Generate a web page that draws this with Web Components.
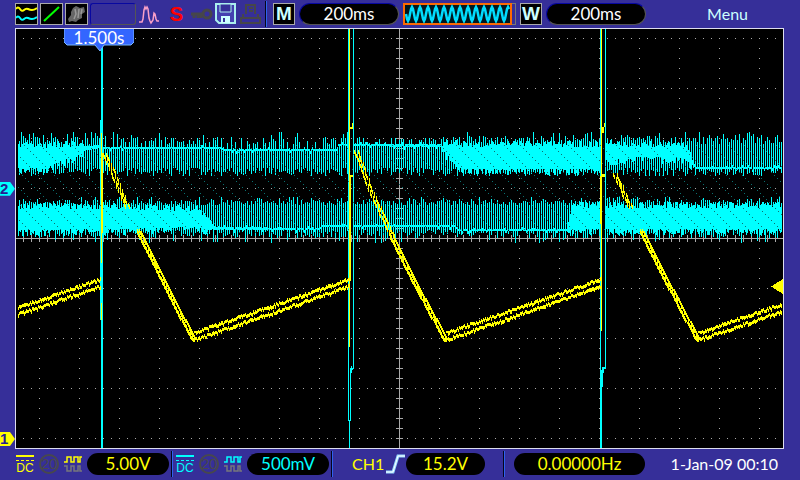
<!DOCTYPE html>
<html lang="en">
<head>
<meta charset="utf-8">
<title>Oscilloscope</title>
<style>
body { margin: 0; background: #362f99; }
</style>
</head>
<body>
<scope-screen></scope-screen>
<script>
const define = (name, html, ready) => {
  const t = document.createElement('template');
  t.innerHTML = html;
  customElements.define(name, class extends HTMLElement {
    constructor() {
      super();
      this.attachShadow({ mode: 'open' }).append(t.content.cloneNode(true));
      if (ready) ready.call(this, this.shadowRoot);
    }
  });
};

define('value-pill', `
<style>
:host { display: flex; align-items: center; justify-content: center; box-sizing: border-box; height: 22px; border-radius: 11px; background: #000; font-size: 17px; line-height: 22px; white-space: nowrap; }
:host([bevel]) { border: 1px solid; border-color: #0808a0 #555 #555 #0808a0; line-height: 20px; }
</style><slot></slot>`);

define('bar-divider', `
<style>:host { display: block; width: 1px; height: 26px; background: #05051c; border-right: 1px solid #2e62ee; }</style>`);

define('letter-box', `
<style>:host { display: grid; place-items: center; box-sizing: border-box; width: 22px; height: 22px; border: 1px solid #aaa; background: #000; color: #cff; font: bold 19px/20px "Liberation Sans", sans-serif; }</style><slot></slot>`);

define('icon-box', `
<style>:host { display: block; box-sizing: border-box; width: 23px; height: 22px; border: 1px solid #aaa; background: #000; }
:host([wide]) { width: 46px; background: none; border-color: #0808a0 #555 #555 #0808a0; border-radius: 3px; }
::slotted(svg) { display: block; }</style><slot></slot>`);

define('channel-info', `
<style>
:host { display: flex; align-items: center; gap: 5px; }
svg { display: block; }
.dc { width: 18px; padding-top: 1px; text-align: center; }
.dc svg { margin-bottom: 1px; }
.dc span { display: block; font: 12px/12px "Liberation Sans", sans-serif; }
text { font-family: "Liberation Sans", sans-serif; }
</style>
<div class="dc"><svg width="18" height="6" viewBox="0 0 18 6"><path d="M0 1h18" stroke="currentColor" stroke-width="2"/><path d="M0 5.5h18" stroke="currentColor" stroke-dasharray="3 2"/></svg><span>DC</span></div>
<svg width="20" height="22" viewBox="0 0 20 22"><circle cx="10" cy="11" r="9" fill="none" stroke="#48484c" stroke-width="2"/><text x="10" y="16" font-size="14" text-anchor="middle" fill="#48484c">20</text></svg>
<svg width="18" height="20" viewBox="0 0 18 20" fill="none"><path d="M0 8h3V3h4v5h3V3h4v5h2V3h2" stroke="currentColor" stroke-width="1.5"/><path d="M0 12h3v5h4v-5h3v5h4v-5h2v5h2" stroke="#77777c" stroke-width="1.5"/></svg>
<slot></slot>`);

define('status-bar', `
<style>
:host { display: flex; align-items: center; height: 28px; padding: 0 15px; box-sizing: border-box; color: #fff; }
.icons { display: flex; align-items: center; gap: 2px; }
svg { display: block; }
.s { width: 23px; text-align: center; color: #f00; font: bold 20px/22px "Liberation Sans", sans-serif; }
.tail { display: flex; align-items: center; gap: 4px; margin-left: 2px; }
bar-divider { margin-right: 2px; }
value-pill { width: 100px; }
.mem { display: flex; box-sizing: border-box; width: 113px; height: 22px; border: 1px solid #777; border-left: 0; }
.mem svg { margin: -1px 0; }
button { margin: 0 37px 0 auto; padding: 0; border: 0; background: none; color: #cff; font: inherit; font-size: 16px; line-height: 22px; }
</style>
<div class="icons">
 <icon-box><svg width="21" height="20" fill="none" stroke-width="2"><path d="M0 5Q2 2 4 5T8 6 12 5 16 6 21 4" stroke="#ff0"/><path d="M0 14Q2 11 4 14T8 15 12 14 16 15 21 13" stroke="#0ff"/></svg></icon-box>
 <icon-box><svg width="21" height="20"><path d="M3 17L18 3" stroke="#0f0" stroke-width="2"/></svg></icon-box>
 <icon-box><svg width="21" height="20"><path d="M7 4l3-2 4 2 4-1 1 5-3 2v4l-4 2-2 2-4-1-3 1-1-3 3-4V8z" fill="#666"/><path d="M9 5l1 5-2 5M13 5l-1 9M16 5l-1 5" stroke="#999" stroke-width="1.5" fill="none"/></svg></icon-box>
 <icon-box wide></icon-box>
 <svg width="25" height="22" fill="none" stroke="#f9a0c8"><path d="M1 19h3l1-3 1-9 1-3 1 2 1-2 1 2 1 9 1 3 1 2 2-3 1-7 1 1 1 5 1 2h2" stroke-width="1.5"/></svg>
 <span class="s">S</span>
 <svg width="23" height="22" fill="none" stroke="#46464a"><circle cx="17" cy="11" r="4" stroke-width="3"/><path d="M13 11H1M4 10v5M8 10v5M11 11v4" stroke-width="3"/></svg>
 <svg width="22" height="22"><path d="M1 1h19v19H4l-3-3z" fill="#4440b0" stroke="#aee" stroke-width="2"/><path d="M5 1h11v8H5z" fill="#362f99" stroke="#aee"/><path d="M6 13h9v7H6z" fill="#cff"/><path d="M8 15h2v4H8z" fill="#362f99"/></svg>
 <svg width="24" height="22" fill="none" stroke="#46464a" stroke-width="2"><path d="M7 11V2h9v9M10 5h4M10 8h4M4 11v4h15v-4M2 15h19v5H2z"/></svg>
</div>
<div class="tail">
 <bar-divider></bar-divider>
 <letter-box>M</letter-box>
 <value-pill bevel>200ms</value-pill>
 <div class="mem"><svg width="109" height="22"><rect x="1" y="1" width="107" height="20" fill="#001820" stroke="#ff6a00" stroke-width="2"/><path id="w" fill="none" stroke="#0df" stroke-width="2.5"/></svg></div>
 <letter-box>W</letter-box>
 <value-pill bevel>200ms</value-pill>
</div>
<button type="button">Menu</button>`, function (r) {
  let d = '';
  for (let x = 3; x <= 106; x++) d += (d ? 'L' : 'M') + x + ' ' + (11 - 7 * Math.cos((x - 1) / 8 * 2 * Math.PI)).toFixed(1);
  r.getElementById('w').setAttribute('d', d);
});

define('measure-bar', `
<style>
:host { display: flex; align-items: center; height: 31px; padding: 0 22px 2px 16px; box-sizing: border-box; color: #ff0; font-size: 17px; }
channel-info value-pill { width: 82px; }
bar-divider { margin: 0 3px 0 2px; flex: none; }
.c2 { color: #0ff; }
.trig { display: flex; align-items: center; padding: 0 16px; }
.trig span { width: 33px; font-size: 16px; white-space: nowrap; }
.trig svg { margin: 0 1px; }
.trig value-pill { width: 79px; }
.freq { width: 131px; margin-left: 6px; }
time { margin-left: auto; color: #fff; font-size: 16px; white-space: nowrap; }
</style>
<channel-info><value-pill>5.00V</value-pill></channel-info>
<bar-divider></bar-divider>
<channel-info class="c2"><value-pill>500mV</value-pill></channel-info>
<bar-divider></bar-divider>
<div class="trig"><span>CH1</span><svg width="19" height="20" fill="none"><path d="M0 18h7L12 2h7" stroke="#9df" stroke-width="3"/><path d="M0 18h7L12 2h7" stroke="#fff"/></svg><value-pill>15.2V</value-pill></div>
<bar-divider></bar-divider>
<value-pill class="freq">0.00000Hz</value-pill>
<time datetime="2009-01-01T00:10">1-Jan-09 00:10</time>`);

define('channel-marker', `
<style>
:host { position: absolute; left: 0; width: 15px; height: 14px; transform: translateY(-50%); background: var(--c); clip-path: polygon(0 0, 10px 0, 100% 50%, 10px 100%, 0 100%); color: #241c90; font: bold 15px/14px "Liberation Sans", sans-serif; }
</style><slot></slot>`);

define('wave-display', `
<style>
:host { position: relative; display: block; border: 1px solid #dde; background: #000; }
svg { position: absolute; inset: 0; width: 100%; height: 100%; display: block; shape-rendering: crispEdges; }
.flag { position: absolute; z-index: 0; left: 48px; top: 0; width: 70px; height: 22px; color: #fff; font-size: 17px; line-height: 17px; text-align: center; }
.flag svg { z-index: -1; shape-rendering: auto; }
</style>
<svg id="plot" viewBox="16 29 767 419" preserveAspectRatio="none"></svg>
<div class="flag"><svg viewBox="0 0 70 22"><path d="M0 0H70V13L67 16H40L36 22 31 16H3L0 13z" fill="#3366ff"/><path d="M0 0V13L3 16H31L36 22 40 16H67L70 13V0" fill="none" stroke="#7ab8ff"/></svg>1.500s</div>`, function (r) {
  let seed = 7;
  const rnd = () => (seed = (seed * 1103515245 + 12345) % 2147483648) / 2147483648;
  const ri = (a, b) => a + Math.floor(rnd() * (b - a + 1));
  const box = (x, y, w, h) => `M${x} ${y}h${w}v${h}h${-w}z`;
  const lerp = (pts, x, k) => {
    let i = 1;
    while (i < pts.length - 1 && pts[i][0] < x) i++;
    const a = pts[i - 1], b = pts[i], t = Math.max(0, Math.min(1, (x - a[0]) / (b[0] - a[0])));
    return Math.round(a[k] + (b[k] - a[k]) * t);
  };
  let grid = '', cyan = '', dim = '', yel = '';

  for (let y = 38; y <= 438; y += 50) for (let x = 23; x < 783; x += 8) grid += box(x, y, 1, 1);
  for (let x = 39; x < 783; x += 40) for (let y = 38; y < 448; y += 10) grid += box(x, y, 1, 1);
  grid += box(399, 29, 1, 419) + box(16, 238, 767, 1);
  for (let y = 38; y < 448; y += 10) grid += box(396, y, 7, 1);
  for (let x = 23; x < 783; x += 8) grid += box(x, 235, 1, 7);

  const up = [[18,148,166],[45,148,168],[60,147,160],[75,147,155],[87,146,150],[100,145,148],[104,147,149],[220,147,149],[224,149,151],[336,149,151],[338,144,146],[440,144,147],[446,145,153],[455,146,164],[462,147,168],[600,147,168],[606,146,159],[640,147,156],[684,147,157],[690,157,163],[696,167,169],[783,167,169]];
  const lo = [[18,209,229],[120,209,228],[180,211,226],[198,212,226],[206,220,228],[216,227,230],[318,228,230],[322,225,227],[454,225,227],[458,229,231],[566,229,231],[570,214,229],[574,208,228],[783,208,228]];
  const rough = [[200, 318], [440, 570], [104, 130], [338, 440], [690, 783]];
  const column = (x, s, far, near, skipTop) => {
    const thick = s[1] - s[0] > 5;
    const n = !thick && rough.some(g => x > g[0] && x < g[1]) && rnd() < .3 ? ri(-2, 2) : 0;
    cyan += box(x, s[0] + n, 1, s[1] - s[0] + (thick ? 1 : 0) + (n ? 1 : 0));
    if ((x & 1) === 1) {
      const a = skipTop && rnd() < .4 ? s[0] : near();
      cyan += box(x, Math.min(a, s[0]), 1, far() - Math.min(a, s[0]));
    } else if (thick) {
      const rise = ri(0, 6), drop = ri(0, 7);
      cyan += box(x, s[0] - rise, 1, s[1] - s[0] + rise + drop);
    }
  };
  for (let x = 18; x < 782; x++) {
    if ((x > 349 && x < 353) || (x > 601 && x < 605)) continue;
    const thin = x > 100 && x < 440;
    column(x, [lerp(up, x, 1), lerp(up, x, 2)], () => ri(168, 176), () => rnd() < .15 ? ri(132, 136) : ri(137, 144), thin);
    column(x, [lerp(lo, x, 1), lerp(lo, x, 2)], () => rnd() < .1 ? ri(240, 243) : ri(230, 238), () => rnd() < .15 ? ri(197, 199) : ri(200, 205), false);
  }
  for (let o = -90; o < 783; o += 16)
    for (let k = 0; k < 90; k += 3) {
      const x = o + k + 18, y = 145 + k;
      if (x > 17 && x < 782) dim += box(x, y, 1, 1);
    }

  cyan += box(101, 29, 2, 419) + box(100, 120, 1, 200);
  cyan += box(348, 29, 1, 392) + box(353, 29, 1, 340) + box(350, 368, 3, 2) + box(350, 368, 1, 53) + box(351, 366, 1, 7) + box(349, 420, 1, 28);
  cyan += box(600, 29, 1, 419) + box(601, 370, 1, 78) + box(605, 29, 1, 340) + box(602, 367, 3, 2) + box(602, 367, 1, 20) + box(603, 367, 1, 6);

  const ramp = (x0, y0, x1, y1) => {
    for (const off of [0, 7]) {
      for (let x = x0; x < x1; x++) {
        const y = Math.round(y0 + off + (y1 - y0) * (x - x0) / (x1 - x0)) + ri(-1, 1);
        yel += box(x, y, 1, rnd() < .3 ? 4 : 3);
      }
    }
  };
  ramp(18, 306, 101, 278);
  ramp(196, 331, 349, 278);
  ramp(448, 331, 601, 278);
  ramp(700, 331, 782, 303);
  const fall = (pts, gaps) => {
    for (let y = pts[0][0]; y < 339; y += 2) {
      if (gaps.some(g => y > g[0] && y < g[1])) continue;
      const x = lerp(pts, y, 1);
      yel += box(x - 1 + ri(0, 1), y, 1, 4) + box(x + 2 + ri(0, 1), y, 1, 4);
      if (y > 230) yel += box(x - 1, y + 1, 2, 2) + box(x + 2, y, 2, 2);
    }
  };
  fall([[153,104],[203,125],[237,141],[280,162],[337,192]], [[206, 229]]);
  fall([[150,355],[192,371],[235,391],[288,417],[337,444]], []);
  fall([[173,614],[203,628],[238,644],[288,670],[337,696]], [[206, 228]]);
  for (const x of [191, 443, 695]) yel += box(x, 338, 5, 2) + box(x + 2, 338, 2, 4) + box(x + 3, 331, 4, 2);
  yel += box(101, 133, 1, 130) + box(102, 153, 1, 80) + box(101, 303, 1, 17);
  yel += box(349, 29, 1, 318) + box(350, 176, 1, 105) + box(349, 127, 4, 2) + box(352, 123, 1, 6) + box(350, 175, 3, 2);
  yel += box(601, 29, 1, 302) + box(600, 176, 1, 48) + box(602, 127, 2, 6) + box(604, 123, 1, 4) + box(602, 174, 3, 3);

  r.getElementById('plot').innerHTML =
    `<path d="${grid}" fill="#aaa"/><path d="${cyan}" fill="#0ff"/><path d="${dim}" fill="#0a7070"/><path d="${yel}" fill="#ff0"/><path d="M771 286.5L783 279V294z" fill="#ff0"/>`;
});

define('scope-screen', `
<style>
:host { display: flex; flex-direction: column; min-height: 100vh; font-family: Lato, sans-serif; font-weight: 400; }
.mid { flex: 1; display: grid; grid-template-columns: 15px 1fr 16px; }
.rail { position: relative; }
</style>
<status-bar></status-bar>
<div class="mid">
 <div class="rail">
  <channel-marker style="--c:#0ff;top:38.2%">2</channel-marker>
  <channel-marker style="--c:#ff0;top:97.6%">1</channel-marker>
 </div>
 <wave-display></wave-display>
</div>
<measure-bar></measure-bar>`);
</script>
</body>
</html>
